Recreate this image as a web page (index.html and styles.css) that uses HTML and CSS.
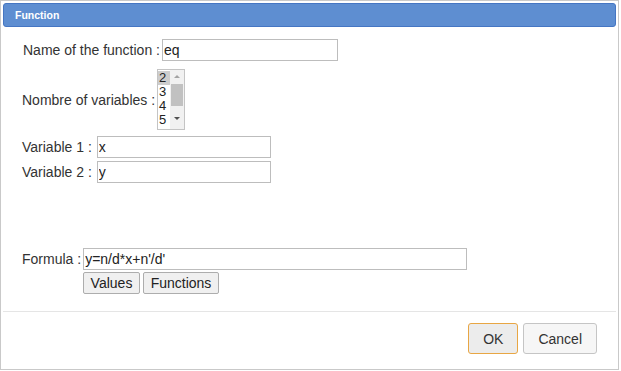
FILE: index.html
```html
<!DOCTYPE html>
<html lang="en">
<head>
    <meta charset="UTF-8">
    <title>Function</title>
    <link rel="stylesheet" href="styles.css">
</head>
<body>

    <div class="dialog">
        <div class="dialog-title">Function</div>

        <div class="dialog-body">
            <div class="row row-name">
                <label for="fname">Name of the function :</label>
                <input type="text" id="fname" class="field field-name" value="eq">
            </div>

            <div class="row row-count">
                <label>Nombre of variables :</label>
                <div class="listbox">
                    <ul class="listbox-items">
                        <li class="selected">2</li>
                        <li>3</li>
                        <li>4</li>
                        <li>5</li>
                    </ul>
                    <div class="scrollbar">
                        <span class="arrow arrow-up"></span>
                        <span class="thumb"></span>
                        <span class="arrow arrow-down"></span>
                    </div>
                </div>
            </div>

            <div class="row row-var">
                <label for="var1">Variable 1 :</label>
                <input type="text" id="var1" class="field field-var" value="x">
            </div>
            <div class="row row-var row-var2">
                <label for="var2">Variable 2 :</label>
                <input type="text" id="var2" class="field field-var" value="y">
            </div>

            <div class="row row-formula">
                <label for="formula">Formula :</label>
                <input type="text" id="formula" class="field field-formula" value="y=n/d*x+n'/d'">
            </div>
            <div class="formula-tools">
                <button type="button" class="tool-btn tool-values">Values</button>
                <button type="button" class="tool-btn tool-functions">Functions</button>
            </div>
        </div>

        <div class="dialog-footer">
            <button type="button" class="btn btn-ok">OK</button>
            <button type="button" class="btn">Cancel</button>
        </div>
    </div>

</body>
</html>
```

FILE: styles.css
```css
/* Basic Reset */
* {
    margin: 0;
    padding: 0;
    box-sizing: border-box;
}

body {
    font-family: 'Liberation Sans', Arial, sans-serif;
    font-size: 14px;
    color: #333;
    background-color: #fff;
}

/* Dialog frame */
.dialog {
    width: 619px;
    height: 370px;
    border: 1px solid #c9c9c9;
    padding: 2px;
    display: flex;
    flex-direction: column;
    background-color: #fff;
}

.dialog-title {
    height: 24px;
    background-color: #5e8ed1;
    border: 1px solid #4576c3;
    border-radius: 3px;
    color: #fff;
    font-weight: bold;
    font-size: 10.5px;
    line-height: 21px;
    padding: 1px 0 0 11px;
}

/* Form */
.dialog-body {
    padding: 12px 0 0 19px;
}

.row {
    display: flex;
    align-items: center;
    gap: 2px;
    height: 22px;
}

.row-name label {
    margin-left: 1px;
}

.row-count {
    height: 61px;
    margin-top: 8px;
}

.row-var {
    margin-top: 6px;
}

.row-var2 {
    margin-top: 3px;
}

.row-formula {
    margin-top: 65px;
}

.field {
    height: 22px;
    border: 1px solid #bdbdbd;
    padding: 0 1px;
    font-family: inherit;
    font-size: 14px;
    color: #222;
    background-color: #fff;
    outline: none;
}

.field-name {
    width: 176px;
}

.field-var {
    width: 174px;
    margin-left: 3px;
}

.field-formula {
    width: 384px;
}

/* Variable count list */
.listbox {
    width: 28px;
    height: 61px;
    border: 1px solid #c4c4c4;
    display: flex;
    background-color: #fff;
}

.listbox-items {
    list-style: none;
    width: 12px;
    padding-top: 1px;
    font-size: 13px;
    line-height: 14px;
    color: #222;
}

.listbox-items li {
    padding-left: 1px;
}

.listbox-items .selected {
    background-color: #cdcdcd;
}

.scrollbar {
    width: 14px;
    background-color: #f1f1f1;
    display: flex;
    flex-direction: column;
    align-items: center;
}

.arrow {
    width: 0;
    height: 0;
    border-left: 3px solid transparent;
    border-right: 3px solid transparent;
}

.arrow-up {
    margin-top: 5px;
    border-bottom: 3px solid #a3a3a3;
}

.arrow-down {
    margin-top: 11px;
    border-top: 3px solid #505050;
}

.thumb {
    width: 12px;
    height: 22px;
    margin-top: 6px;
    background-color: #c1c1c1;
}

.formula-tools {
    display: flex;
    gap: 3px;
    margin: 2px 0 0 61px;
}

.tool-btn {
    height: 22px;
    padding: 0;
    border: 1px solid #adadad;
    border-radius: 2px;
    background-color: #f0f0f0;
    font-family: inherit;
    font-size: 14px;
    color: #222;
}

.tool-values {
    width: 57px;
}

.tool-functions {
    width: 76px;
}

/* Footer */
.dialog-footer {
    flex: 1;
    margin-top: 17px;
    border-top: 1px solid #e5e5e5;
    display: flex;
    justify-content: flex-end;
    align-items: flex-start;
    gap: 5px;
    padding: 11px 19px 0 0;
}

.btn {
    height: 31px;
    padding: 0 14px;
    border: 1px solid #c5c5c5;
    border-radius: 3px;
    background-color: #f6f6f6;
    font-family: inherit;
    font-size: 14px;
    color: #333;
}

.btn-ok {
    border-color: #e8a644;
    background-color: #ececec;
}
```
